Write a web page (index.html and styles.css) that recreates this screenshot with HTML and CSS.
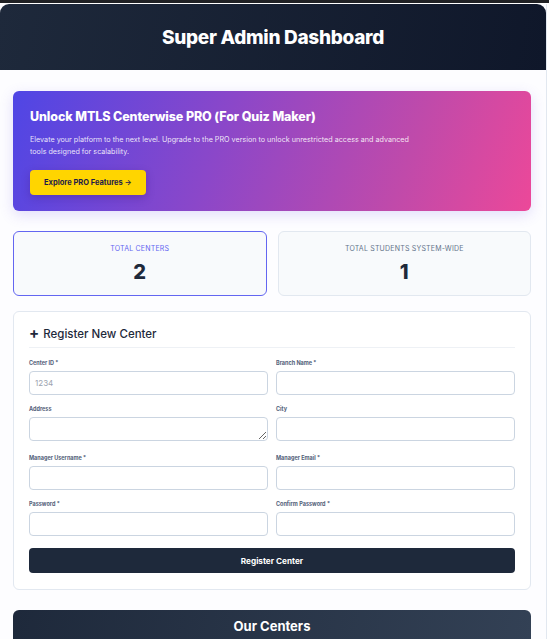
FILE: index.html
```html
<!DOCTYPE html>
<html lang="en">
<head>
<meta charset="utf-8">
<title>Super Admin Dashboard</title>
<link rel="stylesheet" href="styles.css">
</head>
<body>
<div class="topbar"></div>
<div class="app">
  <header class="page-header">
    <h1>Super Admin Dashboard</h1>
  </header>
  <main class="content">
    <section class="promo">
      <h2 class="promo-title">Unlock MTLS Centerwise PRO (For Quiz Maker)</h2>
      <p class="promo-text">Elevate your platform to the next level. Upgrade to the PRO version to unlock unrestricted access and advanced tools designed for scalability.</p>
      <a class="promo-btn" href="#">Explore PRO Features →</a>
    </section>

    <section class="stats">
      <div class="stat stat-active">
        <div class="stat-label">Total Centers</div>
        <div class="stat-value">2</div>
      </div>
      <div class="stat">
        <div class="stat-label">Total Students System-Wide</div>
        <div class="stat-value">1</div>
      </div>
    </section>

    <section class="form-card">
      <h3 class="form-title"><span class="plus">+</span> Register New Center</h3>
      <form class="form-grid">
        <div class="field">
          <label>Center ID *</label>
          <input type="text" placeholder="1234">
        </div>
        <div class="field">
          <label>Branch Name *</label>
          <input type="text">
        </div>
        <div class="field">
          <label>Address</label>
          <textarea rows="1"></textarea>
        </div>
        <div class="field">
          <label>City</label>
          <input type="text">
        </div>
        <div class="field">
          <label>Manager Username *</label>
          <input type="text">
        </div>
        <div class="field">
          <label>Manager Email *</label>
          <input type="text">
        </div>
        <div class="field">
          <label>Password *</label>
          <input type="password">
        </div>
        <div class="field">
          <label>Confirm Password *</label>
          <input type="password">
        </div>
        <button type="button" class="submit">Register Center</button>
      </form>
    </section>

    <section class="centers">
      <h2>Our Centers</h2>
    </section>
  </main>
</div>
</body>
</html>
```

FILE: styles.css
```css
* { box-sizing: border-box; }

html, body {
  margin: 0;
  padding: 0;
  background: #ffffff;
  font-family: "Inter", "Noto Sans", sans-serif;
  color: #1e293b;
  overflow: hidden;
}

.topbar {
  height: 3px;
  background: #202124;
}

.app {
  width: 547px;
  margin-top: 1px;
  border-right: 1px solid #e2e8f0;
  background: #fdfdff;
  min-height: 640px;
}

.page-header {
  height: 66px;
  border-radius: 9px 9px 0 0;
  background: linear-gradient(100deg, #1e293b 0%, #0f172a 100%);
  display: flex;
  align-items: center;
  justify-content: center;
}

.page-header h1 {
  margin: 0;
  color: #ffffff;
  font-size: 19px;
  font-weight: 800;
  letter-spacing: -0.3px;
}

.content {
  padding: 21px 15px 0 13px;
  display: flex;
  flex-direction: column;
}

.promo {
  border-radius: 6px;
  padding: 17px 17px 16px;
  background: linear-gradient(110deg, #4f46e5 0%, #8b47c9 40%, #c04aaa 75%, #ec4899 100%);
  box-shadow: 0 4px 14px rgba(99, 80, 230, 0.18);
  color: #ffffff;
}

.promo-title {
  margin: 0 0 8px;
  font-size: 12.5px;
  line-height: 18px;
  font-weight: 800;
  letter-spacing: -0.1px;
}

.promo-text {
  margin: 0 0 11px;
  font-size: 7.2px;
  line-height: 12px;
  max-width: 385px;
  color: rgba(255, 255, 255, 0.88);
}

.promo-btn {
  display: inline-block;
  height: 25px;
  line-height: 25px;
  padding: 0 14px;
  border-radius: 4px;
  background: #ffd500;
  color: #1e1b4b;
  font-size: 7.5px;
  font-weight: 700;
  text-decoration: none;
  box-shadow: 0 3px 8px rgba(60, 20, 120, 0.3);
}

.stats {
  margin-top: 20px;
  display: grid;
  grid-template-columns: 1fr 1fr;
  gap: 11px;
}

.stat {
  height: 65px;
  border: 1px solid #e2e8f0;
  border-radius: 6px;
  background: #f8fafc;
  display: flex;
  flex-direction: column;
  align-items: center;
  padding-top: 12px;
}

.stat-active {
  border-color: #6366f1;
}

.stat-label {
  font-size: 7px;
  line-height: 10px;
  text-transform: uppercase;
  letter-spacing: 0.2px;
  color: #64748b;
}

.stat-active .stat-label {
  color: #6366f1;
}

.stat-value {
  margin-top: 6px;
  font-size: 20px;
  line-height: 24px;
  font-weight: 800;
  color: #1e293b;
}

.form-card {
  margin-top: 15px;
  border: 1px solid #e2e8f0;
  border-radius: 6px;
  background: #ffffff;
  padding: 14px 15px 16px;
}

.form-title {
  margin: 0 0 10px;
  padding-bottom: 6px;
  border-bottom: 1px solid #eef1f5;
  font-size: 11.5px;
  line-height: 14px;
  font-weight: 500;
  color: #1e293b;
}

.plus {
  font-size: 15px;
  font-weight: 700;
  margin-right: 1px;
}

.form-grid {
  display: grid;
  grid-template-columns: 1fr 1fr;
  column-gap: 8px;
  row-gap: 9px;
}

.field {
  display: block;
}

.field label {
  display: block;
  font-size: 5.5px;
  line-height: 10px;
  font-weight: 700;
  color: #526079;
  margin-bottom: 3px;
}

.field input,
.field textarea {
  display: block;
  width: 100%;
  height: 24px;
  margin: 0;
  padding: 0 5px;
  border: 1px solid #cbd5e1;
  border-radius: 4px;
  background: #ffffff;
  font-family: inherit;
  font-size: 8px;
  color: #334155;
}

.field textarea {
  resize: vertical;
  margin-bottom: 3px;
}

.field input::placeholder {
  color: #9ca3af;
}

.submit {
  grid-column: 1 / -1;
  margin-top: 3px;
  height: 25px;
  border: 0;
  border-radius: 4px;
  background: #1e293b;
  color: #ffffff;
  font-family: inherit;
  font-size: 8.2px;
  font-weight: 700;
}

.centers {
  margin-top: 20px;
  height: 40px;
  border-radius: 6px 6px 0 0;
  background: linear-gradient(100deg, #1e293b 0%, #334155 100%);
  padding-top: 8px;
  text-align: center;
}

.centers h2 {
  margin: 0;
  color: #ffffff;
  font-size: 13px;
  line-height: 16px;
  font-weight: 700;
}
```
